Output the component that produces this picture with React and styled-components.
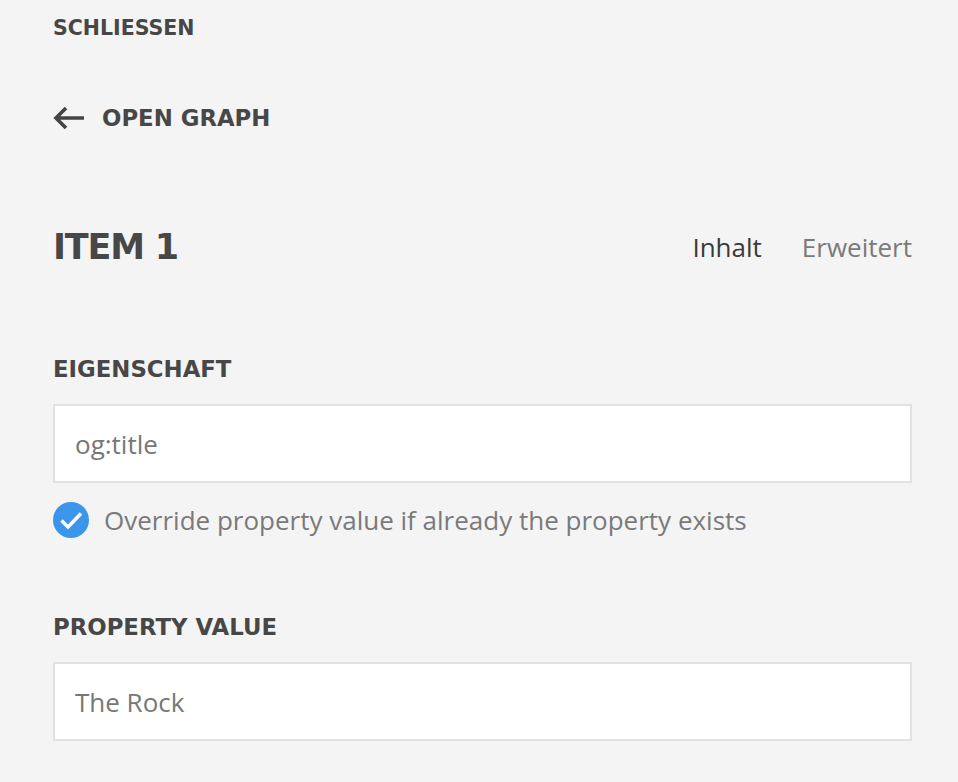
import React from "react";
import styled, { createGlobalStyle } from "styled-components";

const Global = createGlobalStyle`
  html, body {
    margin: 0;
    padding: 0;
    background: #f4f4f4;
  }
  body {
    font-family: "Open Sans", "Liberation Sans", sans-serif;
  }
`;

const Panel = styled.div`
  width: 958px;
  height: 782px;
  box-sizing: border-box;
  padding: 0 46px 0 53px;
  background: #f4f4f4;
  overflow: hidden;
`;

const Heading = styled.div`
  font-family: "DejaVu Sans", "Liberation Sans", sans-serif;
  font-weight: 700;
  color: #474747;
  text-transform: uppercase;
  white-space: nowrap;
`;

const CloseLink = styled(Heading)`
  height: 56px;
  line-height: 56px;
  font-size: 20.5px;
  cursor: pointer;
`;

const BackRow = styled.div`
  display: flex;
  align-items: center;
  gap: 17px;
  height: 56px;
  margin-top: 34px;
  cursor: pointer;
`;

const BackLabel = styled(Heading)`
  font-size: 22.8px;
`;

const TitleRow = styled.div`
  display: flex;
  align-items: center;
  justify-content: space-between;
  height: 60px;
  margin-top: 71px;
`;

const Title = styled(Heading)`
  font-size: 35px;
  letter-spacing: -1.2px;
`;

const Tabs = styled.div`
  display: flex;
  gap: 40px;
`;

const Tab = styled.span`
  font-size: 26px;
  color: ${(p) => (p.$active ? "#3a3a3a" : "#7a7a7a")};
  cursor: pointer;
`;

const FieldLabel = styled(Heading)`
  height: 30px;
  line-height: 30px;
  font-size: 22.8px;
  margin-top: ${(p) => p.$top}px;
`;

const Input = styled.div`
  margin-top: 20px;
  height: 79px;
  box-sizing: border-box;
  background: #fff;
  border: 2px solid #e2e2e2;
  padding: 0 20px;
  display: flex;
  align-items: center;
  font-size: 26px;
  color: #777;
`;

const CheckRow = styled.label`
  display: flex;
  align-items: center;
  gap: 15px;
  height: 36px;
  margin-top: 19px;
  font-size: 26px;
  color: #7a7a7a;
  cursor: pointer;
`;

const CheckCircle = styled.span`
  width: 36px;
  height: 36px;
  border-radius: 50%;
  background: #3b95eb;
  display: flex;
  align-items: center;
  justify-content: center;
  flex-shrink: 0;
`;

const ArrowLeft = () => (
  <svg width="32" height="24" viewBox="0 0 32 24" fill="none">
    <path
      d="M31 12H3M13 2L3 12l10 10"
      stroke="#444"
      strokeWidth="3.6"
      strokeLinecap="butt"
      strokeLinejoin="miter"
    />
  </svg>
);

const Check = () => (
  <svg width="36" height="36" viewBox="0 0 36 36" fill="none">
    <path d="M8.5 18.5l6.5 6.5L28 11.5" stroke="#fff" strokeWidth="3.4" />
  </svg>
);

export default function App() {
  return (
    <>
      <Global />
      <Panel>
        <CloseLink>Schliessen</CloseLink>
        <BackRow>
          <ArrowLeft />
          <BackLabel>Open Graph</BackLabel>
        </BackRow>
        <TitleRow>
          <Title>Item 1</Title>
          <Tabs>
            <Tab $active>Inhalt</Tab>
            <Tab>Erweitert</Tab>
          </Tabs>
        </TitleRow>
        <FieldLabel $top={77}>Eigenschaft</FieldLabel>
        <Input>og:title</Input>
        <CheckRow>
          <CheckCircle>
            <Check />
          </CheckCircle>
          Override property value if already the property exists
        </CheckRow>
        <FieldLabel $top={74}>Property Value</FieldLabel>
        <Input>The Rock</Input>
      </Panel>
    </>
  );
}
